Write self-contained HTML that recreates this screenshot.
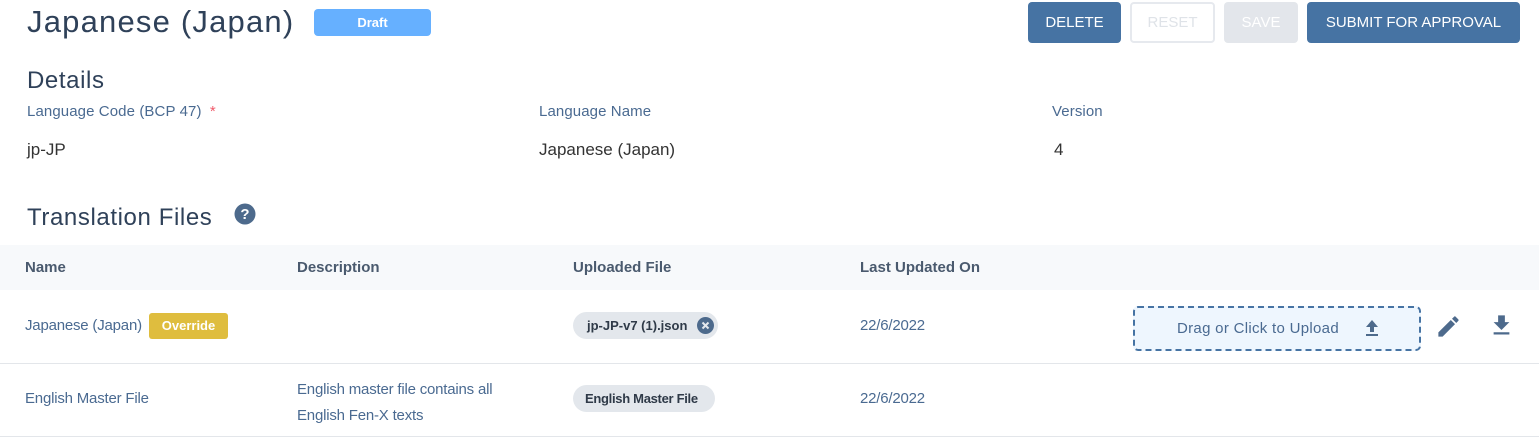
<!DOCTYPE html>
<html><head><style>
*{margin:0;padding:0;box-sizing:border-box}
body{width:1539px;height:443px;background:#fff;font-family:"Liberation Sans",sans-serif;position:relative;overflow:hidden;color:#2f4159}
.a{position:absolute;white-space:nowrap}
.btn{position:absolute;top:2px;height:41px;border-radius:4px;font-size:15px;display:flex;align-items:center;justify-content:center;color:#fff}
.lbl{font-size:15px;color:#4a6a91}
.val{font-size:17px;color:#333}
.th{font-size:15px;font-weight:bold;color:#4a5a6e}
.td{font-size:15px;color:#4a6a91;letter-spacing:-0.2px}
.chip{position:absolute;height:27px;border-radius:14px;background:#e3e7ec;font-size:13px;font-weight:bold;color:#2f3a48;display:flex;align-items:center;padding:0 14px;white-space:nowrap}
</style></head><body>
<div class="a" style="left:27px;top:4px;font-size:31px;color:#2f4159;letter-spacing:1.2px">Japanese (Japan)</div>
<div class="a" style="left:314px;top:9px;width:117px;height:27px;background:#66b0ff;border-radius:4px;color:#fff;font-size:13px;font-weight:bold;text-align:center;line-height:27px">Draft</div>
<div class="btn" style="left:1028px;width:93px;background:#4673a3">DELETE</div>
<div class="btn" style="left:1130px;width:85px;border:2px solid #e6e9ee;color:#dfe3e8">RESET</div>
<div class="btn" style="left:1224px;width:74px;background:#e3e6eb;color:#fff">SAVE</div>
<div class="btn" style="left:1307px;width:213px;background:#4673a3">SUBMIT FOR APPROVAL</div>
<div class="a" style="left:27px;top:67px;font-size:24px;letter-spacing:0.6px">Details</div>
<div class="a lbl" style="left:27px;top:103px;letter-spacing:0.1px">Language Code (BCP 47) <span style="color:#f05a6a;margin-left:4px">*</span></div>
<div class="a lbl" style="left:539px;top:103px;letter-spacing:0.1px">Language Name</div>
<div class="a lbl" style="left:1052px;top:103px;letter-spacing:0.1px">Version</div>
<div class="a val" style="left:27px;top:140px">jp-JP</div>
<div class="a val" style="left:539px;top:140px">Japanese (Japan)</div>
<div class="a val" style="left:1054px;top:140px">4</div>
<div class="a" style="left:27px;top:204px;font-size:24px;letter-spacing:0.6px">Translation Files</div>
<svg class="a" style="left:234px;top:203px" width="22" height="22" viewBox="0 0 22 22"><circle cx="11" cy="11" r="10.5" fill="#4d6a8c"/><text x="11" y="16" text-anchor="middle" font-size="15" font-weight="bold" fill="#fff" font-family="Liberation Sans">?</text></svg>
<div class="a" style="left:0;top:245px;width:1539px;height:45px;background:#f7f9fb"></div>
<div class="a th" style="left:25px;top:259px">Name</div>
<div class="a th" style="left:297px;top:259px">Description</div>
<div class="a th" style="left:573px;top:259px">Uploaded File</div>
<div class="a th" style="left:860px;top:259px">Last Updated On</div>
<div class="a td" style="left:25px;top:317px">Japanese (Japan)</div>
<div class="a" style="left:149px;top:313px;width:79px;height:26px;background:#dfbd3e;border-radius:3px;color:#fff;font-size:13px;font-weight:bold;text-align:center;line-height:26px">Override</div>
<div class="chip" style="left:573px;top:312px;width:145px;padding-right:0">jp-JP-v7 (1).json
<svg style="position:absolute;right:4px;top:5px" width="17" height="17" viewBox="0 0 17 17"><circle cx="8.5" cy="8.5" r="8.5" fill="#4d6a8c"/><path d="M5.5 5.5l6 6M11.5 5.5l-6 6" stroke="#e3e7ec" stroke-width="2"/></svg></div>
<div class="a td" style="left:860px;top:317px">22/6/2022</div>
<div class="a" style="left:1133px;top:306px;width:288px;height:45px;border:2px dashed #4673a3;border-radius:5px;background:#eef6fe"></div>
<div class="a" style="left:1177px;top:320px;font-size:15px;color:#4a6a91;letter-spacing:0.3px">Drag or Click to Upload</div>
<svg class="a" style="left:1364px;top:319px" width="16" height="18" viewBox="0 0 16 18"><path d="M8 1L2 8h4v5h4V8h4z" fill="#4d6a8c"/><rect x="2" y="15" width="12" height="2" fill="#4d6a8c"/></svg>
<svg class="a" style="left:1435px;top:313px" width="27" height="27" viewBox="0 0 24 24"><path d="M3 17.25V21h3.75L17.81 9.94l-3.75-3.75L3 17.25zM20.71 7.04a1 1 0 000-1.41l-2.34-2.34a1 1 0 00-1.41 0l-1.83 1.83 3.75 3.75 1.83-1.83z" fill="#4d6a8c"/></svg>
<svg class="a" style="left:1488px;top:312px" width="27" height="27" viewBox="0 0 24 24"><path d="M19 9h-4V3H9v6H5l7 7 7-7zM5 18v2h14v-2H5z" fill="#4d6a8c"/></svg>
<div class="a" style="left:0;top:363px;width:1539px;height:1px;background:#e3e6ea"></div>
<div class="a td" style="left:25px;top:390px">English Master File</div>
<div class="a td" style="left:297px;top:377px;line-height:26px">English master file contains all<br>English Fen-X texts</div>
<div class="chip" style="left:573px;top:385px;width:142px;padding:0 12px;letter-spacing:-0.3px">English Master File</div>
<div class="a td" style="left:860px;top:390px">22/6/2022</div>
<div class="a" style="left:0;top:436px;width:1539px;height:1px;background:#e3e6ea"></div>
</body></html>
